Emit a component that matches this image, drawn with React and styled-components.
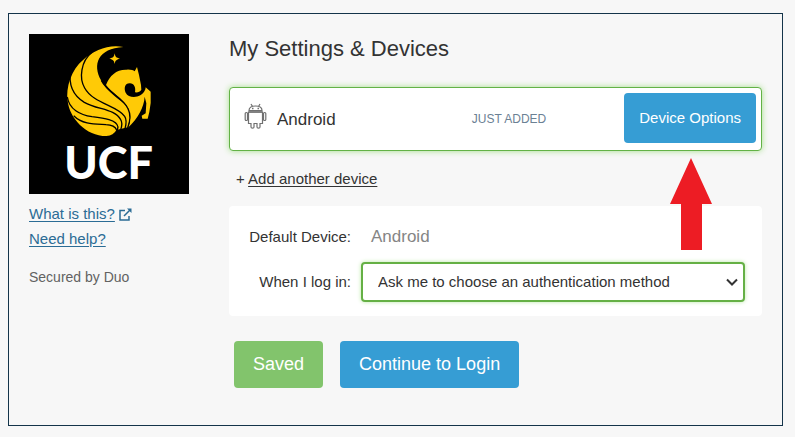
import React from "react";
import styled, { createGlobalStyle } from "styled-components";

const GlobalStyle = createGlobalStyle`
  *, *::before, *::after { box-sizing: border-box; }
  body {
    margin: 0;
    background: #f7f7f7;
    color: #333;
    font-family: "Liberation Sans", Arial, sans-serif;
    font-size: 15px;
    line-height: 20px;
  }
`;

const Frame = styled.div`
  display: flex;
  align-items: flex-start;
  gap: 40px;
  margin: 13px 12px 11px 8px;
  padding: 20px 20px 37px;
  border: 1px solid #14344a;
`;

const Sidebar = styled.aside`
  flex: 0 0 160px;
`;

const Logo = styled.svg`
  display: block;
  width: 160px;
  height: 160px;
  background: #000;
`;

const HelpLinks = styled.nav`
  display: flex;
  flex-direction: column;
  align-items: flex-start;
  gap: 5px;
  margin-top: 10px;
`;

const HelpRow = styled.div`
  display: flex;
  align-items: center;
  gap: 4px;
  color: #2b6c95;
`;

const HelpLink = styled.a`
  color: inherit;
  text-underline-offset: 2px;
`;

const Secured = styled.p`
  margin: 18px 0 0;
  font-size: 14px;
  color: #626262;
`;

const Main = styled.main`
  position: relative;
  flex: 1;
  min-width: 0;
`;

const Title = styled.h1`
  margin: 0 0 23px;
  font-size: 22px;
  font-weight: 400;
  line-height: 30px;
`;

const DeviceCard = styled.section`
  display: flex;
  align-items: center;
  height: 64px;
  padding: 0 5px 0 14px;
  background: #fff;
  border: 1px solid #63b246;
  border-radius: 4px;
  box-shadow: 0 0 6px #a5e08c;
`;

const AndroidIcon = styled.svg`
  width: 23px;
  height: 26px;
  margin: 0 10px 7px 0;
`;

const DeviceName = styled.span`
  flex: 1;
  padding-top: 2px;
  font-size: 17px;
`;

const Status = styled.span`
  margin-right: 78px;
  font-size: 12px;
  color: #6b8194;
`;

const Button = styled.button`
  height: 47px;
  padding: 0 19px;
  border: 0;
  border-radius: 4px;
  background: ${({ $tone }) => ($tone === "success" ? "#82c46c" : "#369dd4")};
  color: #fff;
  font-family: inherit;
  font-size: 18px;
  white-space: nowrap;
`;

const OptionsButton = styled(Button)`
  height: 50px;
  margin-bottom: 2px;
  padding: 0 15px 2px;
  font-size: 15px;
`;

const AddDevice = styled.p`
  margin: 18px 0 17px 7px;
`;

const AddLink = styled.a`
  color: inherit;
  text-underline-offset: 2px;
`;

const Preferences = styled.form`
  display: grid;
  grid-template-columns: 105px 1fr;
  align-items: center;
  gap: 6px 10px;
  padding: 12px 17px 14px;
  background: #fff;
  border-radius: 4px;
`;

const FieldLabel = styled.label`
  text-align: right;
  white-space: nowrap;
`;

const DefaultDevice = styled.output`
  padding: 8px 10px;
  line-height: 22px;
  font-size: 17px;
  color: #858585;
`;

const SelectWrap = styled.div`
  position: relative;
`;

const Select = styled.select`
  display: block;
  width: 100%;
  height: 40px;
  padding: 0 30px 0 15px;
  appearance: none;
  border: 2px solid #65b045;
  border-radius: 4px;
  box-shadow: 0 0 4px #bce9a8;
  background: #fff;
  color: #333;
  font: inherit;
`;

const Chevron = styled.svg`
  position: absolute;
  top: 16px;
  right: 7px;
  width: 12px;
  height: 9px;
  pointer-events: none;
`;

const Actions = styled.div`
  display: flex;
  gap: 17px;
  margin: 25px 5px 0;
`;

const Pointer = styled.svg`
  position: absolute;
  top: 124px;
  right: 50px;
  width: 42px;
  height: 92px;
  pointer-events: none;
`;

function UcfLogo() {
  return (
    <Logo viewBox="87 102 480 480" role="img" aria-label="UCF">
      <g fill="#ffca06">
        <path d="M370 141C326 132 282 151 250 179C213 209 197 264 203 302C208 354 258 408 319 408Q341 407 349 390L383 382C391 353 397 337 384 322C361 298 324 279 304 242C276 194 294 145 370 141Z" />
        <path d="M318 255C329 226 350 208 379 209Q398 208 404 214L411 201L417 225L423 255L424 269C420 276 413 278 405 277C408 263 402 250 390 250C375 249 371 264 377 278C384 292 405 295 421 286C430 281 437 270 437 262L452 275V309L448 336L443 356H427L425 347L437 340L439 310L434 290C432 321 415 354 383 384C395 356 393 336 381 319C367 297 335 277 318 255Z" />
        <path d="M344 160C346 171 348 173 360 176C348 179 346 181 344 192C342 181 340 179 328 176C340 173 342 171 344 160Z" />
      </g>
      <g fill="none" stroke="#000" strokeWidth="4">
        <path d="M276 157C242 184 237 235 254 264C280 311 351 316 374 349Q382 361 375 386" />
        <path d="M212 211C205 252 219 286 253 307C294 330 344 326 362 359Q369 370 362 389" />
        <path d="M202 291C207 327 240 345 276 350C311 354 351 359 354 381L350 398" />
        <path d="M221 347C248 374 286 372 318 374Q344 375 350 390" />
        <path d="M304 241C323 279 367 290 384 326Q396 350 383 384" />
      </g>
      <text x="326" y="536" textAnchor="middle" fill="#fff" fontFamily="Lato, sans-serif" fontWeight="900" fontSize="135">UCF</text>
    </Logo>
  );
}

export default function App() {
  return (
    <>
      <GlobalStyle />
      <Frame>
        <Sidebar>
          <UcfLogo />
          <HelpLinks>
            <HelpRow>
              <HelpLink href="#about">What is this?</HelpLink>
              <svg width="13" height="13" viewBox="0 0 13 13" fill="none" stroke="currentColor" strokeWidth="1.5" aria-hidden="true">
                <path d="M6 2.5H1V12H10V8M5 8L11 2" />
                <path d="M8 .5H12.5V5Z" fill="currentColor" stroke="none" />
              </svg>
            </HelpRow>
            <HelpRow>
              <HelpLink href="#help">Need help?</HelpLink>
            </HelpRow>
          </HelpLinks>
          <Secured>Secured by Duo</Secured>
        </Sidebar>
        <Main>
          <Title>My Settings &amp; Devices</Title>
          <DeviceCard>
            <AndroidIcon viewBox="0 0 23 26" fill="none" stroke="#707070" strokeWidth="1.2" aria-hidden="true">
              <path d="M7 1L8.5 3.5M16 1L14.5 3.5M5 7.5C5 4.5 8 3 11.5 3S18 4.5 18 7.5Z" />
              <path d="M4.5 9H18.5V20.5H16V24Q16 25.2 14.5 25.2T13 24V20.5H10V24Q10 25.2 8.500 25.2T7 24V20.5H4.5Z" />
              <rect x="1.2" y="9.5" width="2.3" height="8" rx="1" />
              <rect x="19.5" y="9.5" width="2.3" height="8" rx="1" />
              <path d="M8 5.5H9.5M13.5 5.5H15M4.5 9H18.5" strokeWidth="1.5" />
            </AndroidIcon>
            <DeviceName>Android</DeviceName>
            <Status>JUST ADDED</Status>
            <OptionsButton type="button">Device Options</OptionsButton>
          </DeviceCard>
          <AddDevice>
            + <AddLink href="#add">Add another device</AddLink>
          </AddDevice>
          <Preferences>
            <FieldLabel htmlFor="default-device">Default Device:</FieldLabel>
            <DefaultDevice id="default-device">Android</DefaultDevice>
            <FieldLabel htmlFor="login-method">When I log in:</FieldLabel>
            <SelectWrap>
              <Select id="login-method" defaultValue="ask">
                <option value="ask">Ask me to choose an authentication method</option>
              </Select>
              <Chevron viewBox="0 0 12 9" fill="none" stroke="#333" strokeWidth="2" aria-hidden="true">
                <path d="M1 1.5L6 6.5L11 1.5" />
              </Chevron>
            </SelectWrap>
          </Preferences>
          <Actions>
            <Button type="button" $tone="success">Saved</Button>
            <Button type="button">Continue to Login</Button>
          </Actions>
          <Pointer viewBox="0 0 42 92" fill="#ed1c24" aria-hidden="true">
            <path d="M21 0L42 46H32V92H11V46H0Z" />
          </Pointer>
        </Main>
      </Frame>
    </>
  );
}
